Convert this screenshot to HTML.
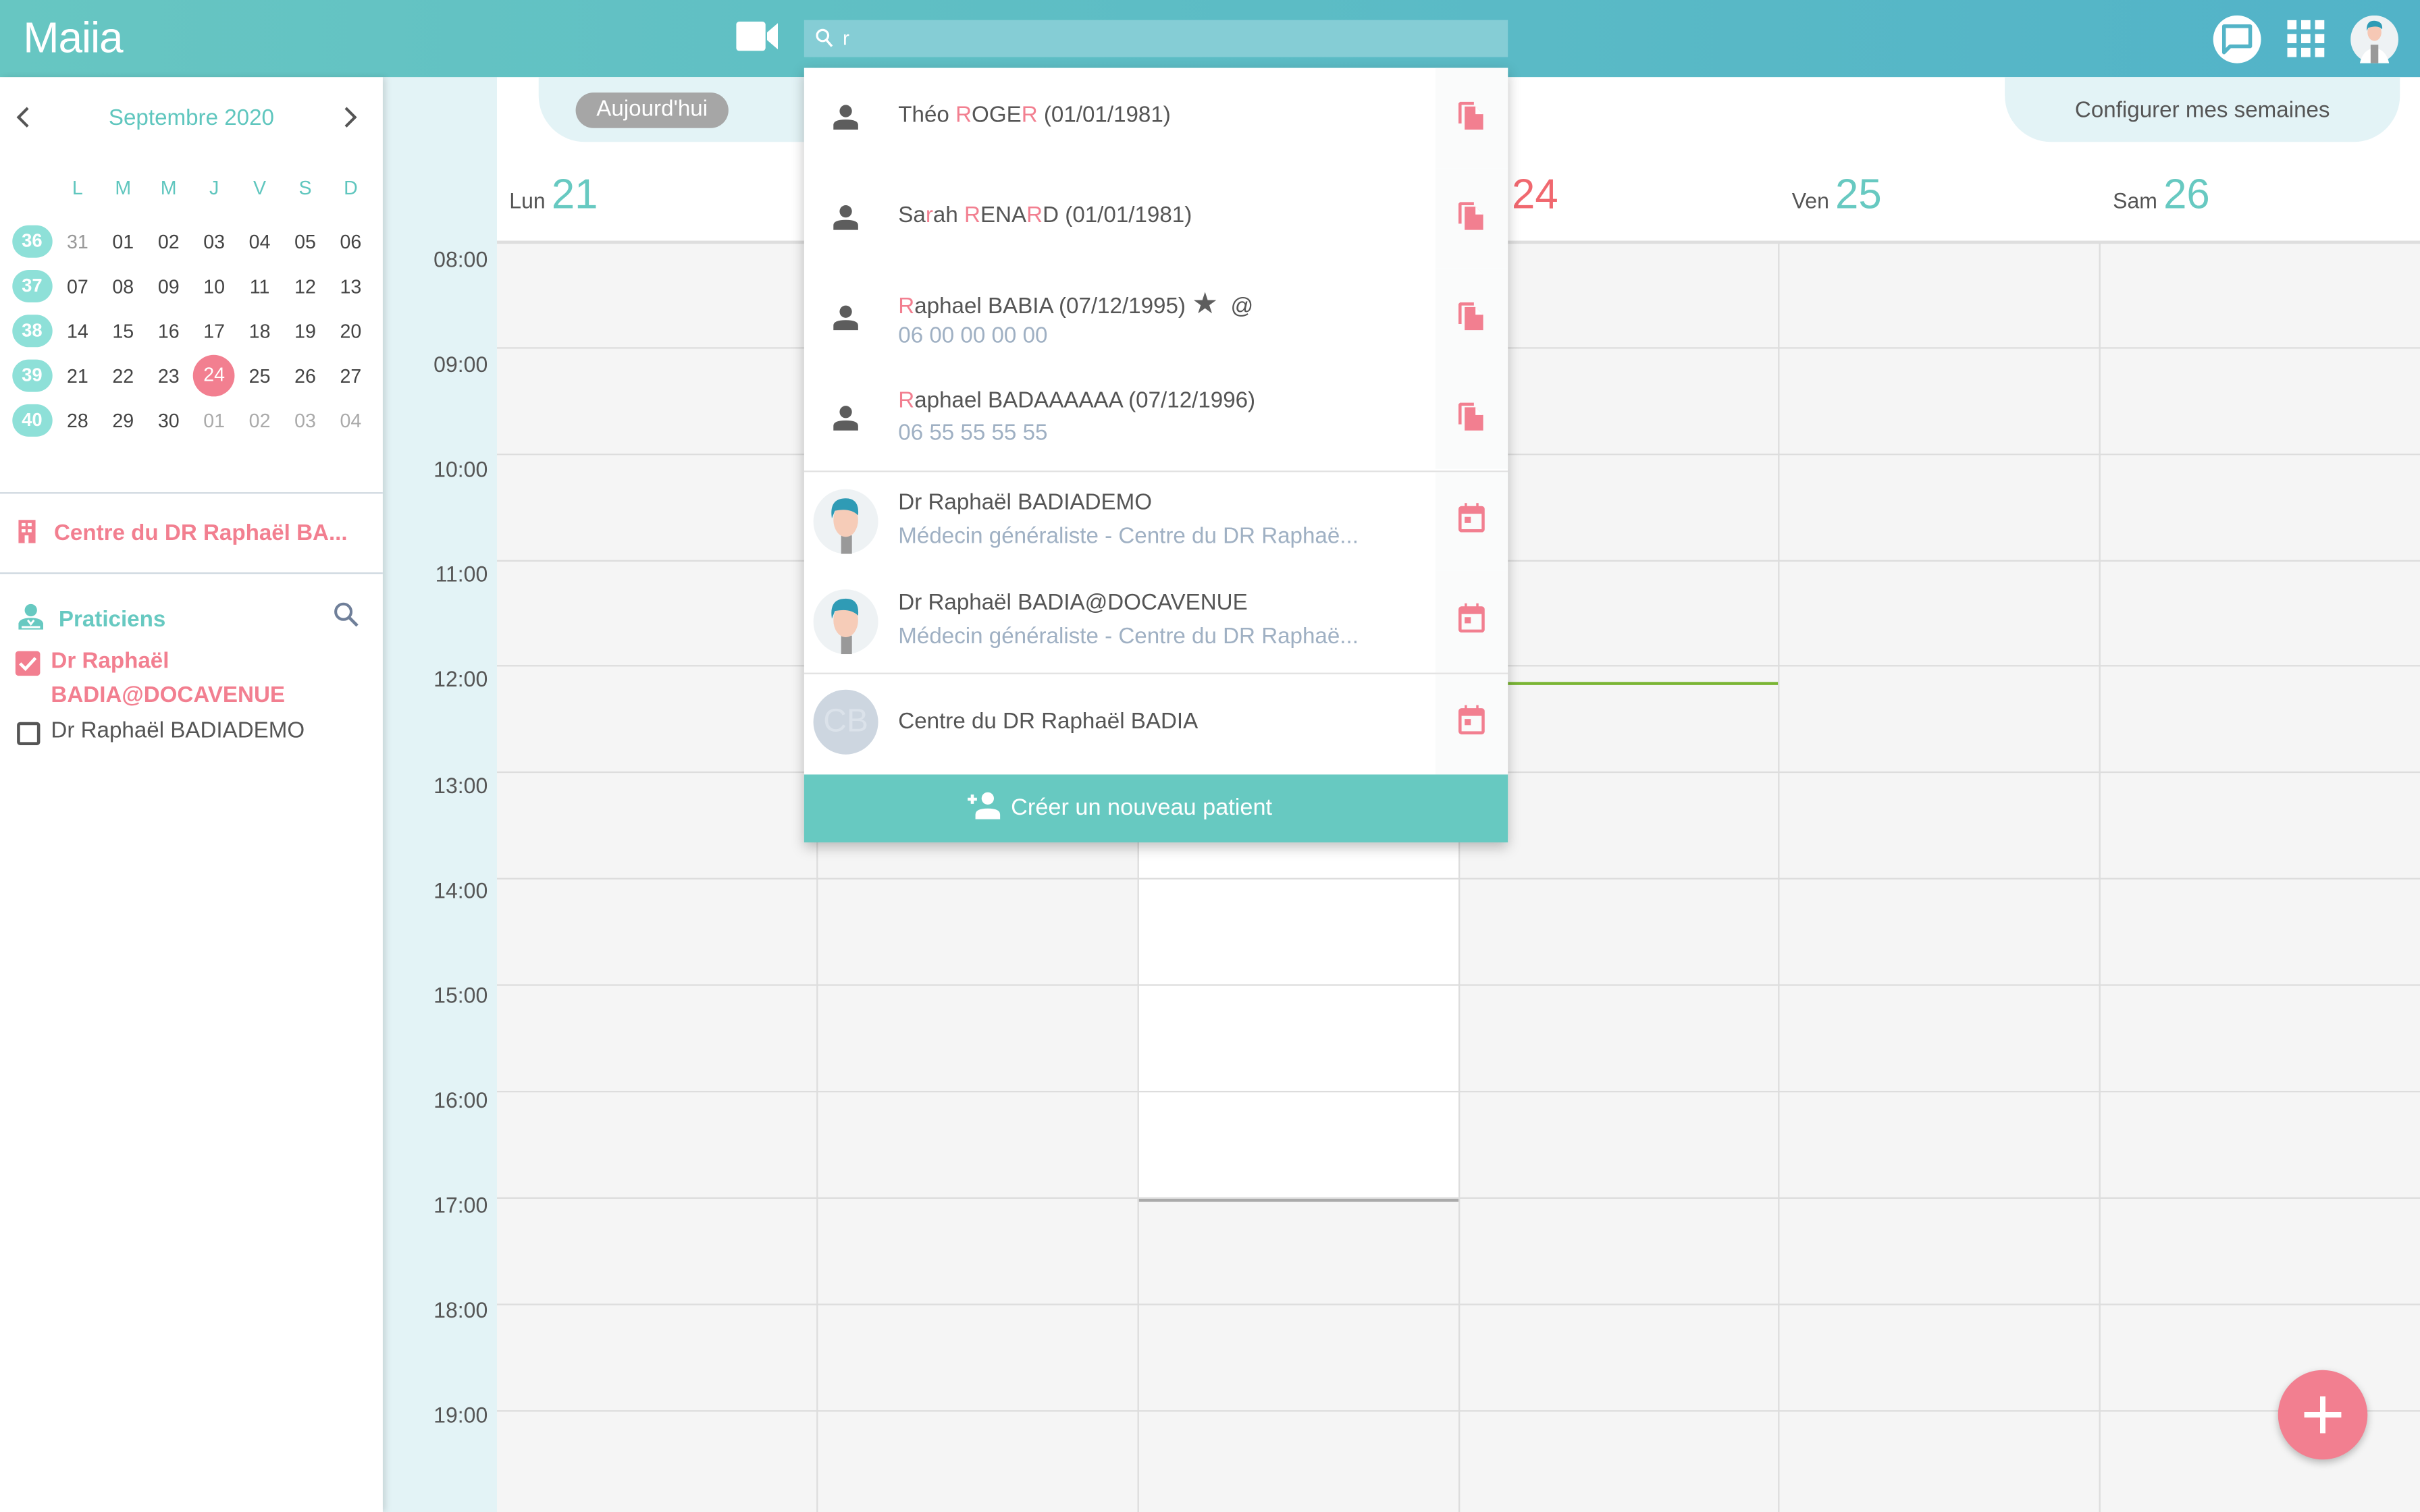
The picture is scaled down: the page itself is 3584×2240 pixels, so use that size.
<!DOCTYPE html>
<html><head><meta charset="utf-8"><style>
*{margin:0;padding:0;box-sizing:border-box}
html,body{width:3584px;height:2240px;overflow:hidden;background:#fff}
#r{position:absolute;left:0;top:0;width:1568px;height:980px;transform:scale(2.285714);transform-origin:0 0;font-family:"Liberation Sans",sans-serif;color:#555;overflow:hidden}
.a{position:absolute}
.top{left:0;top:0;width:1568px;height:50px;background:linear-gradient(90deg,#67c6c2,#52b3c8)}
.side{left:0;top:50px;width:248px;height:930px;background:#fff;box-shadow:2px 0 4px rgba(0,0,0,.12);z-index:3}
.tl{left:248px;top:50px;width:74px;height:930px;background:#e3f3f6}
.grid{left:322px;top:157px;width:1246px;height:823px;background:#f5f5f5}
.hl{position:absolute;left:0;width:1246px;height:1px;background:#ddd}
.vl{position:absolute;top:0;width:1px;height:823px;background:#ddd}
.time{position:absolute;left:248px;width:68px;text-align:right;font-size:14px;color:#555}
.dh{position:absolute;top:111px;font-size:14px;color:#555}
.dh b{font-size:27px;color:#67c9c1;font-weight:normal;margin-left:4px}
.cal td{width:29.5px;height:29px;text-align:center;font-size:12.5px;color:#444}
.wk{display:inline-block;width:26px;height:21px;border-radius:11px;background:#8ee0d8;color:#fff;font-weight:bold;line-height:21px;font-size:12px}
.dd{left:521px;top:44px;width:456px;height:502px;background:#fff;box-shadow:0 3px 8px rgba(0,0,0,.25);z-index:5}
.row{position:absolute;left:0;width:456px}
.row .ic{position:absolute;right:0;top:0;width:47px;height:100%;background:#fafbfb}
.nm{position:absolute;left:61px;font-size:14.5px;color:#555;white-space:nowrap}
.sub{position:absolute;left:61px;font-size:14.5px;color:#9fb0c3;white-space:nowrap}
.p{color:#f27f90}
</style></head><body><div id="r">
<div class="a top"></div>
<div class="a" style="left:15px;top:9px;font-size:28px;color:#fff;letter-spacing:-0.5px">Maiia</div>
<svg class="a" style="left:477px;top:14px" width="28" height="19" viewBox="0 0 28 19"><rect x="0" y="0" width="19" height="19" rx="2" fill="#fff"/><path d="M20 7 L27 1 V18 L20 12Z" fill="#fff"/></svg>
<div class="a" style="left:521px;top:13px;width:456px;height:24px;background:#85cdd5"></div>
<svg class="a" style="left:528px;top:18px" width="12" height="13" viewBox="0 0 12 13"><circle cx="5" cy="5" r="3.6" stroke="#fff" stroke-width="1.4" fill="none"/><path d="M7.5 8 L11 12" stroke="#fff" stroke-width="1.5"/></svg>
<div class="a" style="left:546px;top:17px;font-size:13px;color:#fff">r</div>
<div class="a" style="left:1434px;top:10px;width:31px;height:31px;border-radius:50%;background:#fff"></div>
<svg class="a" style="left:1439px;top:15px" width="21" height="21" viewBox="0 0 21 21"><path d="M2 2 H19 V15 H6 L2 19Z" fill="none" stroke="#53b4c7" stroke-width="2.4" stroke-linejoin="round"/></svg>
<svg class="a" style="left:1482px;top:13px" width="25" height="25" viewBox="0 0 25 25" fill="#fff"><rect x="0" y="0" width="6" height="6"/><rect x="9" y="0" width="6" height="6"/><rect x="18" y="0" width="6" height="6"/><rect x="0" y="9" width="6" height="6"/><rect x="9" y="9" width="6" height="6"/><rect x="18" y="9" width="6" height="6"/><rect x="0" y="18" width="6" height="6"/><rect x="9" y="18" width="6" height="6"/><rect x="18" y="18" width="6" height="6"/></svg>
<svg class="a" style="left:1523px;top:10px" width="31" height="31" viewBox="0 0 31 31"><circle cx="15.5" cy="15.5" r="15.5" fill="#eef2f4"/><path d="M6 31 Q8 22 15.5 21 Q23 22 25 31Z" fill="#fff"/><rect x="13" y="19" width="5" height="12" fill="#999"/><ellipse cx="15.5" cy="11" rx="4.5" ry="5.5" fill="#f6c8b5"/><path d="M10.5 10 Q10 3 16 3.5 Q21 4 20.5 9 Q18 6 11.5 8Z" fill="#2f9bb5"/></svg>

<div class="a tl"></div>
<div class="a" style="left:322px;top:50px;width:1246px;height:107px;background:#fff;border-bottom:1px solid #ddd"></div>
<div class="a" style="left:349px;top:50px;width:180px;height:42px;background:#e3f3f6;border-radius:0 0 0 30px"></div>
<div class="a" style="left:373px;top:60px;width:99px;height:23px;border-radius:12px;background:#a6a6a6;color:#fff;font-size:14.5px;text-align:center;line-height:23px">Aujourd'hui</div>
<div class="a" style="left:1299px;top:50px;width:256px;height:42px;background:#e3f3f6;border-radius:0 0 30px 30px;text-align:center;font-size:14.5px;line-height:44px;color:#555">Configurer mes semaines</div>
<div class="dh" style="left:330px">Lun<b>21</b></div>
<div class="dh" style="left:953px">Jeu<b style="color:#f0686f">24</b></div>
<div class="dh" style="left:1161px">Ven<b>25</b></div>
<div class="dh" style="left:1369px">Sam<b>26</b></div>
<div class="a grid">
<div class="a" style="left:415px;top:274px;width:208px;height:346px;background:#fff"></div>
<div class="hl" style="top:0"></div><div class="hl" style="top:68px"></div><div class="hl" style="top:137px"></div><div class="hl" style="top:206px"></div><div class="hl" style="top:274px"></div><div class="hl" style="top:343px"></div><div class="hl" style="top:412px"></div><div class="hl" style="top:481px"></div><div class="hl" style="top:550px"></div><div class="hl" style="top:619px"></div><div class="hl" style="top:688px"></div><div class="hl" style="top:757px"></div>
<div class="a" style="left:415px;top:620px;width:208px;height:2px;background:#aaa"></div>
<div class="vl" style="left:207px"></div><div class="vl" style="left:415px"></div><div class="vl" style="left:623px"></div><div class="vl" style="left:830px"></div><div class="vl" style="left:1038px"></div>
<div class="a" style="left:623px;top:285px;width:207px;height:2px;background:#7ab534"></div>
</div>
<div class="time" style="top:160px">08:00</div><div class="time" style="top:228px">09:00</div><div class="time" style="top:296px">10:00</div><div class="time" style="top:364px">11:00</div><div class="time" style="top:432px">12:00</div><div class="time" style="top:501px">13:00</div><div class="time" style="top:569px">14:00</div><div class="time" style="top:637px">15:00</div><div class="time" style="top:705px">16:00</div><div class="time" style="top:773px">17:00</div><div class="time" style="top:841px">18:00</div><div class="time" style="top:909px">19:00</div>

<div class="a side">
<svg class="a" style="left:9px;top:19px" width="12" height="14" viewBox="0 0 12 14"><path d="M9 1 L3 7 L9 13" stroke="#555" stroke-width="1.8" fill="none"/></svg>
<div class="a" style="left:0;width:248px;top:19px;text-align:center;font-size:14.5px;color:#5fc6be">Septembre 2020</div>
<svg class="a" style="left:221px;top:19px" width="12" height="14" viewBox="0 0 12 14"><path d="M3 1 L9 7 L3 13" stroke="#555" stroke-width="1.8" fill="none"/></svg>
<table class="cal a" style="left:6px;top:57px;border-collapse:collapse">
<tr><td></td><td style="color:#5fc6be">L</td><td style="color:#5fc6be">M</td><td style="color:#5fc6be">M</td><td style="color:#5fc6be">J</td><td style="color:#5fc6be">V</td><td style="color:#5fc6be">S</td><td style="color:#5fc6be">D</td></tr>
<tr style="height:6px"><td colspan=8 style="height:6px"></td></tr>
<tr><td><span class="wk">36</span></td><td style="color:#999">31</td><td>01</td><td>02</td><td>03</td><td>04</td><td>05</td><td>06</td></tr>
<tr><td><span class="wk">37</span></td><td>07</td><td>08</td><td>09</td><td>10</td><td>11</td><td>12</td><td>13</td></tr>
<tr><td><span class="wk">38</span></td><td>14</td><td>15</td><td>16</td><td>17</td><td>18</td><td>19</td><td>20</td></tr>
<tr><td><span class="wk">39</span></td><td>21</td><td>22</td><td>23</td><td><span style="display:inline-block;width:27px;height:27px;border-radius:50%;background:#f27f90;color:#fff;line-height:27px">24</span></td><td>25</td><td>26</td><td>27</td></tr>
<tr><td><span class="wk">40</span></td><td>28</td><td>29</td><td>30</td><td style="color:#aaa">01</td><td style="color:#aaa">02</td><td style="color:#aaa">03</td><td style="color:#aaa">04</td></tr>
</table>
<div class="a" style="left:0;top:269px;width:248px;height:1px;background:#cfd8e0"></div>
<svg class="a" style="left:11px;top:286px" width="13" height="17" viewBox="0 0 13 17"><path d="M1 1 H12 V16 H13 H0 H1Z" fill="#f27f90"/><rect x="3" y="3" width="2.5" height="2" fill="#fff"/><rect x="7" y="3" width="2.5" height="2" fill="#fff"/><rect x="3" y="7" width="2.5" height="2" fill="#fff"/><rect x="7" y="7" width="2.5" height="2" fill="#fff"/><rect x="5" y="11" width="2.5" height="5" fill="#fff"/></svg>
<div class="a" style="left:35px;top:288px;font-size:14.5px;font-weight:bold;color:#f27f90">Centre du DR Raphaël BA...</div>
<div class="a" style="left:0;top:321px;width:248px;height:1px;background:#cfd8e0"></div>
<svg class="a" style="left:11px;top:341px" width="18" height="18" viewBox="0 0 18 18"><circle cx="9" cy="4.5" r="4" fill="#67c9c1"/><path d="M1 17 V13 Q2 9.5 9 9.5 Q16 9.5 17 13 V17Z" fill="#67c9c1"/><path d="M3 15.5 H15 M7 11 L9 13.5 L11 11" stroke="#fff" stroke-width="1.3" fill="none"/></svg>
<div class="a" style="left:38px;top:344px;font-size:14.5px;font-weight:bold;color:#67c9c1">Praticiens</div>
<svg class="a" style="left:216px;top:340px" width="17" height="17" viewBox="0 0 17 17"><circle cx="6.5" cy="6.5" r="5" stroke="#6f7f99" stroke-width="1.8" fill="none"/><path d="M10 10 L15.5 15.5" stroke="#6f7f99" stroke-width="2"/></svg>
<div class="a" style="left:10px;top:372px;width:16px;height:16px;border-radius:2px;background:#f27f90"></div>
<svg class="a" style="left:12px;top:375px" width="12" height="10" viewBox="0 0 12 10"><path d="M1 5 L4.5 8.5 L11 1.5" stroke="#fff" stroke-width="2" fill="none"/></svg>
<div class="a" style="left:33px;top:368px;font-size:14.5px;font-weight:bold;color:#f27f90;line-height:22px">Dr Raphaël<br>BADIA@DOCAVENUE</div>
<div class="a" style="left:11px;top:418px;width:15px;height:15px;border:2px solid #555;border-radius:2px"></div>
<div class="a" style="left:33px;top:416px;font-size:14.5px;color:#555">Dr Raphaël BADIADEMO</div>
</div>

<div class="a dd">
<div class="row" style="top:0;height:65px"><div class="ic"></div></div>
<div class="row" style="top:65px;height:65px"><div class="ic"></div></div>
<div class="row" style="top:130px;height:66px"><div class="ic"></div></div>
<div class="row" style="top:196px;height:64px"><div class="ic"></div></div>
<div class="row" style="top:261px;height:65px;border-top:1px solid #e2e2e2"><div class="ic"></div></div>
<div class="row" style="top:326px;height:66px"><div class="ic"></div></div>
<div class="row" style="top:392px;height:66px;border-top:1px solid #e2e2e2"><div class="ic"></div></div>
<div class="row" style="top:458px;height:44px;background:#67c9c1"></div>

<svg class="a" style="left:18px;top:23px" width="18" height="18" viewBox="0 0 18 18"><circle cx="9" cy="5" r="4" fill="#5d5d5d"/><path d="M1 17 V14 Q1 10.5 9 10.5 Q17 10.5 17 14 V17Z" fill="#5d5d5d"/></svg>
<svg class="a" style="left:18px;top:88px" width="18" height="18" viewBox="0 0 18 18"><circle cx="9" cy="5" r="4" fill="#5d5d5d"/><path d="M1 17 V14 Q1 10.5 9 10.5 Q17 10.5 17 14 V17Z" fill="#5d5d5d"/></svg>
<svg class="a" style="left:18px;top:153px" width="18" height="18" viewBox="0 0 18 18"><circle cx="9" cy="5" r="4" fill="#5d5d5d"/><path d="M1 17 V14 Q1 10.5 9 10.5 Q17 10.5 17 14 V17Z" fill="#5d5d5d"/></svg>
<svg class="a" style="left:18px;top:218px" width="18" height="18" viewBox="0 0 18 18"><circle cx="9" cy="5" r="4" fill="#5d5d5d"/><path d="M1 17 V14 Q1 10.5 9 10.5 Q17 10.5 17 14 V17Z" fill="#5d5d5d"/></svg>

<div class="nm" style="top:23px">Théo <span class="p">R</span>OGE<span class="p">R</span> (01/01/1981)</div>
<div class="nm" style="top:88px">Sa<span class="p">r</span>ah <span class="p">R</span>ENA<span class="p">R</span>D (01/01/1981)</div>
<div class="nm" style="top:142px"><span class="p">R</span>aphael BABIA (07/12/1995) <span style="color:#5d5d5d;font-size:19px">★</span> &nbsp;@</div>
<div class="sub" style="top:166px">06 00 00 00 00</div>
<div class="nm" style="top:208px"><span class="p">R</span>aphael BADAAAAAA (07/12/1996)</div>
<div class="sub" style="top:229px">06 55 55 55 55</div>

<svg class="a" style="left:6px;top:273px" width="42" height="42" viewBox="0 0 42 42"><circle cx="21" cy="21" r="21" fill="#eef2f4"/><rect x="18" y="30" width="7" height="12" fill="#999"/><ellipse cx="21" cy="20" rx="8" ry="11" fill="#f6ccb8"/><path d="M12 19 Q10 6 21 6 Q30 6 29 17 Q24 12 14 14 Z" fill="#2f9bb5"/></svg>
<svg class="a" style="left:6px;top:338px" width="42" height="42" viewBox="0 0 42 42"><circle cx="21" cy="21" r="21" fill="#eef2f4"/><rect x="18" y="30" width="7" height="12" fill="#999"/><ellipse cx="21" cy="20" rx="8" ry="11" fill="#f6ccb8"/><path d="M12 19 Q10 6 21 6 Q30 6 29 17 Q24 12 14 14 Z" fill="#2f9bb5"/></svg>
<div class="a" style="left:6px;top:403px;width:42px;height:42px;border-radius:50%;background:#cdd6e0;color:#dbe2ea;font-size:21px;text-align:center;line-height:42px">CB</div>

<div class="nm" style="top:274px">Dr Raphaël BADIADEMO</div>
<div class="sub" style="top:296px">Médecin généraliste - Centre du DR Raphaë...</div>
<div class="nm" style="top:339px">Dr Raphaël BADIA@DOCAVENUE</div>
<div class="sub" style="top:361px">Médecin généraliste - Centre du DR Raphaë...</div>
<div class="nm" style="top:416px">Centre du DR Raphaël BADIA</div>

<svg class="a" style="left:423px;top:21px" width="18" height="20" viewBox="0 0 18 20"><path d="M1 2 V15 H3 V3 H11 V1 H2Z" fill="#f27f90"/><path d="M5 4 H12 L17 9 V19 H5Z" fill="#f27f90"/><path d="M12 4 V9 H17" fill="#fff"/></svg>
<svg class="a" style="left:423px;top:86px" width="18" height="20" viewBox="0 0 18 20"><path d="M1 2 V15 H3 V3 H11 V1 H2Z" fill="#f27f90"/><path d="M5 4 H12 L17 9 V19 H5Z" fill="#f27f90"/><path d="M12 4 V9 H17" fill="#fff"/></svg>
<svg class="a" style="left:423px;top:151px" width="18" height="20" viewBox="0 0 18 20"><path d="M1 2 V15 H3 V3 H11 V1 H2Z" fill="#f27f90"/><path d="M5 4 H12 L17 9 V19 H5Z" fill="#f27f90"/><path d="M12 4 V9 H17" fill="#fff"/></svg>
<svg class="a" style="left:423px;top:216px" width="18" height="20" viewBox="0 0 18 20"><path d="M1 2 V15 H3 V3 H11 V1 H2Z" fill="#f27f90"/><path d="M5 4 H12 L17 9 V19 H5Z" fill="#f27f90"/><path d="M12 4 V9 H17" fill="#fff"/></svg>

<svg class="a" style="left:424px;top:282px" width="17" height="19" viewBox="0 0 17 19"><rect x="1" y="3" width="15" height="15" rx="1" fill="none" stroke="#f27f90" stroke-width="2"/><rect x="1" y="3" width="15" height="4" fill="#f27f90"/><rect x="4" y="0" width="1.5" height="4" fill="#f27f90"/><rect x="11.5" y="0" width="1.5" height="4" fill="#f27f90"/><rect x="4" y="9" width="4" height="4" fill="#f27f90"/></svg>
<svg class="a" style="left:424px;top:347px" width="17" height="19" viewBox="0 0 17 19"><rect x="1" y="3" width="15" height="15" rx="1" fill="none" stroke="#f27f90" stroke-width="2"/><rect x="1" y="3" width="15" height="4" fill="#f27f90"/><rect x="4" y="0" width="1.5" height="4" fill="#f27f90"/><rect x="11.5" y="0" width="1.5" height="4" fill="#f27f90"/><rect x="4" y="9" width="4" height="4" fill="#f27f90"/></svg>
<svg class="a" style="left:424px;top:413px" width="17" height="19" viewBox="0 0 17 19"><rect x="1" y="3" width="15" height="15" rx="1" fill="none" stroke="#f27f90" stroke-width="2"/><rect x="1" y="3" width="15" height="4" fill="#f27f90"/><rect x="4" y="0" width="1.5" height="4" fill="#f27f90"/><rect x="11.5" y="0" width="1.5" height="4" fill="#f27f90"/><rect x="4" y="9" width="4" height="4" fill="#f27f90"/></svg>

<svg class="a" style="left:103px;top:469px" width="25" height="18" viewBox="0 0 25 18"><path d="M3 5 H9 M6 2 V8" stroke="#fff" stroke-width="2"/><circle cx="16" cy="4.5" r="4" fill="#fff"/><path d="M8 18 V15 Q8 11 16 11 Q24 11 24 15 V18Z" fill="#fff"/></svg>
<div class="a" style="left:134px;top:471px;font-size:15px;color:#fff">Créer un nouveau patient</div>
</div>

<div class="a" style="left:1476px;top:888px;width:58px;height:58px;border-radius:50%;background:#f27f90;box-shadow:0 2px 5px rgba(0,0,0,.25)"></div>
<svg class="a" style="left:1491px;top:903px" width="28" height="28" viewBox="0 0 28 28"><path d="M14 2 V26 M2 14 H26" stroke="#fff" stroke-width="3.5"/></svg>
</div></body></html>
